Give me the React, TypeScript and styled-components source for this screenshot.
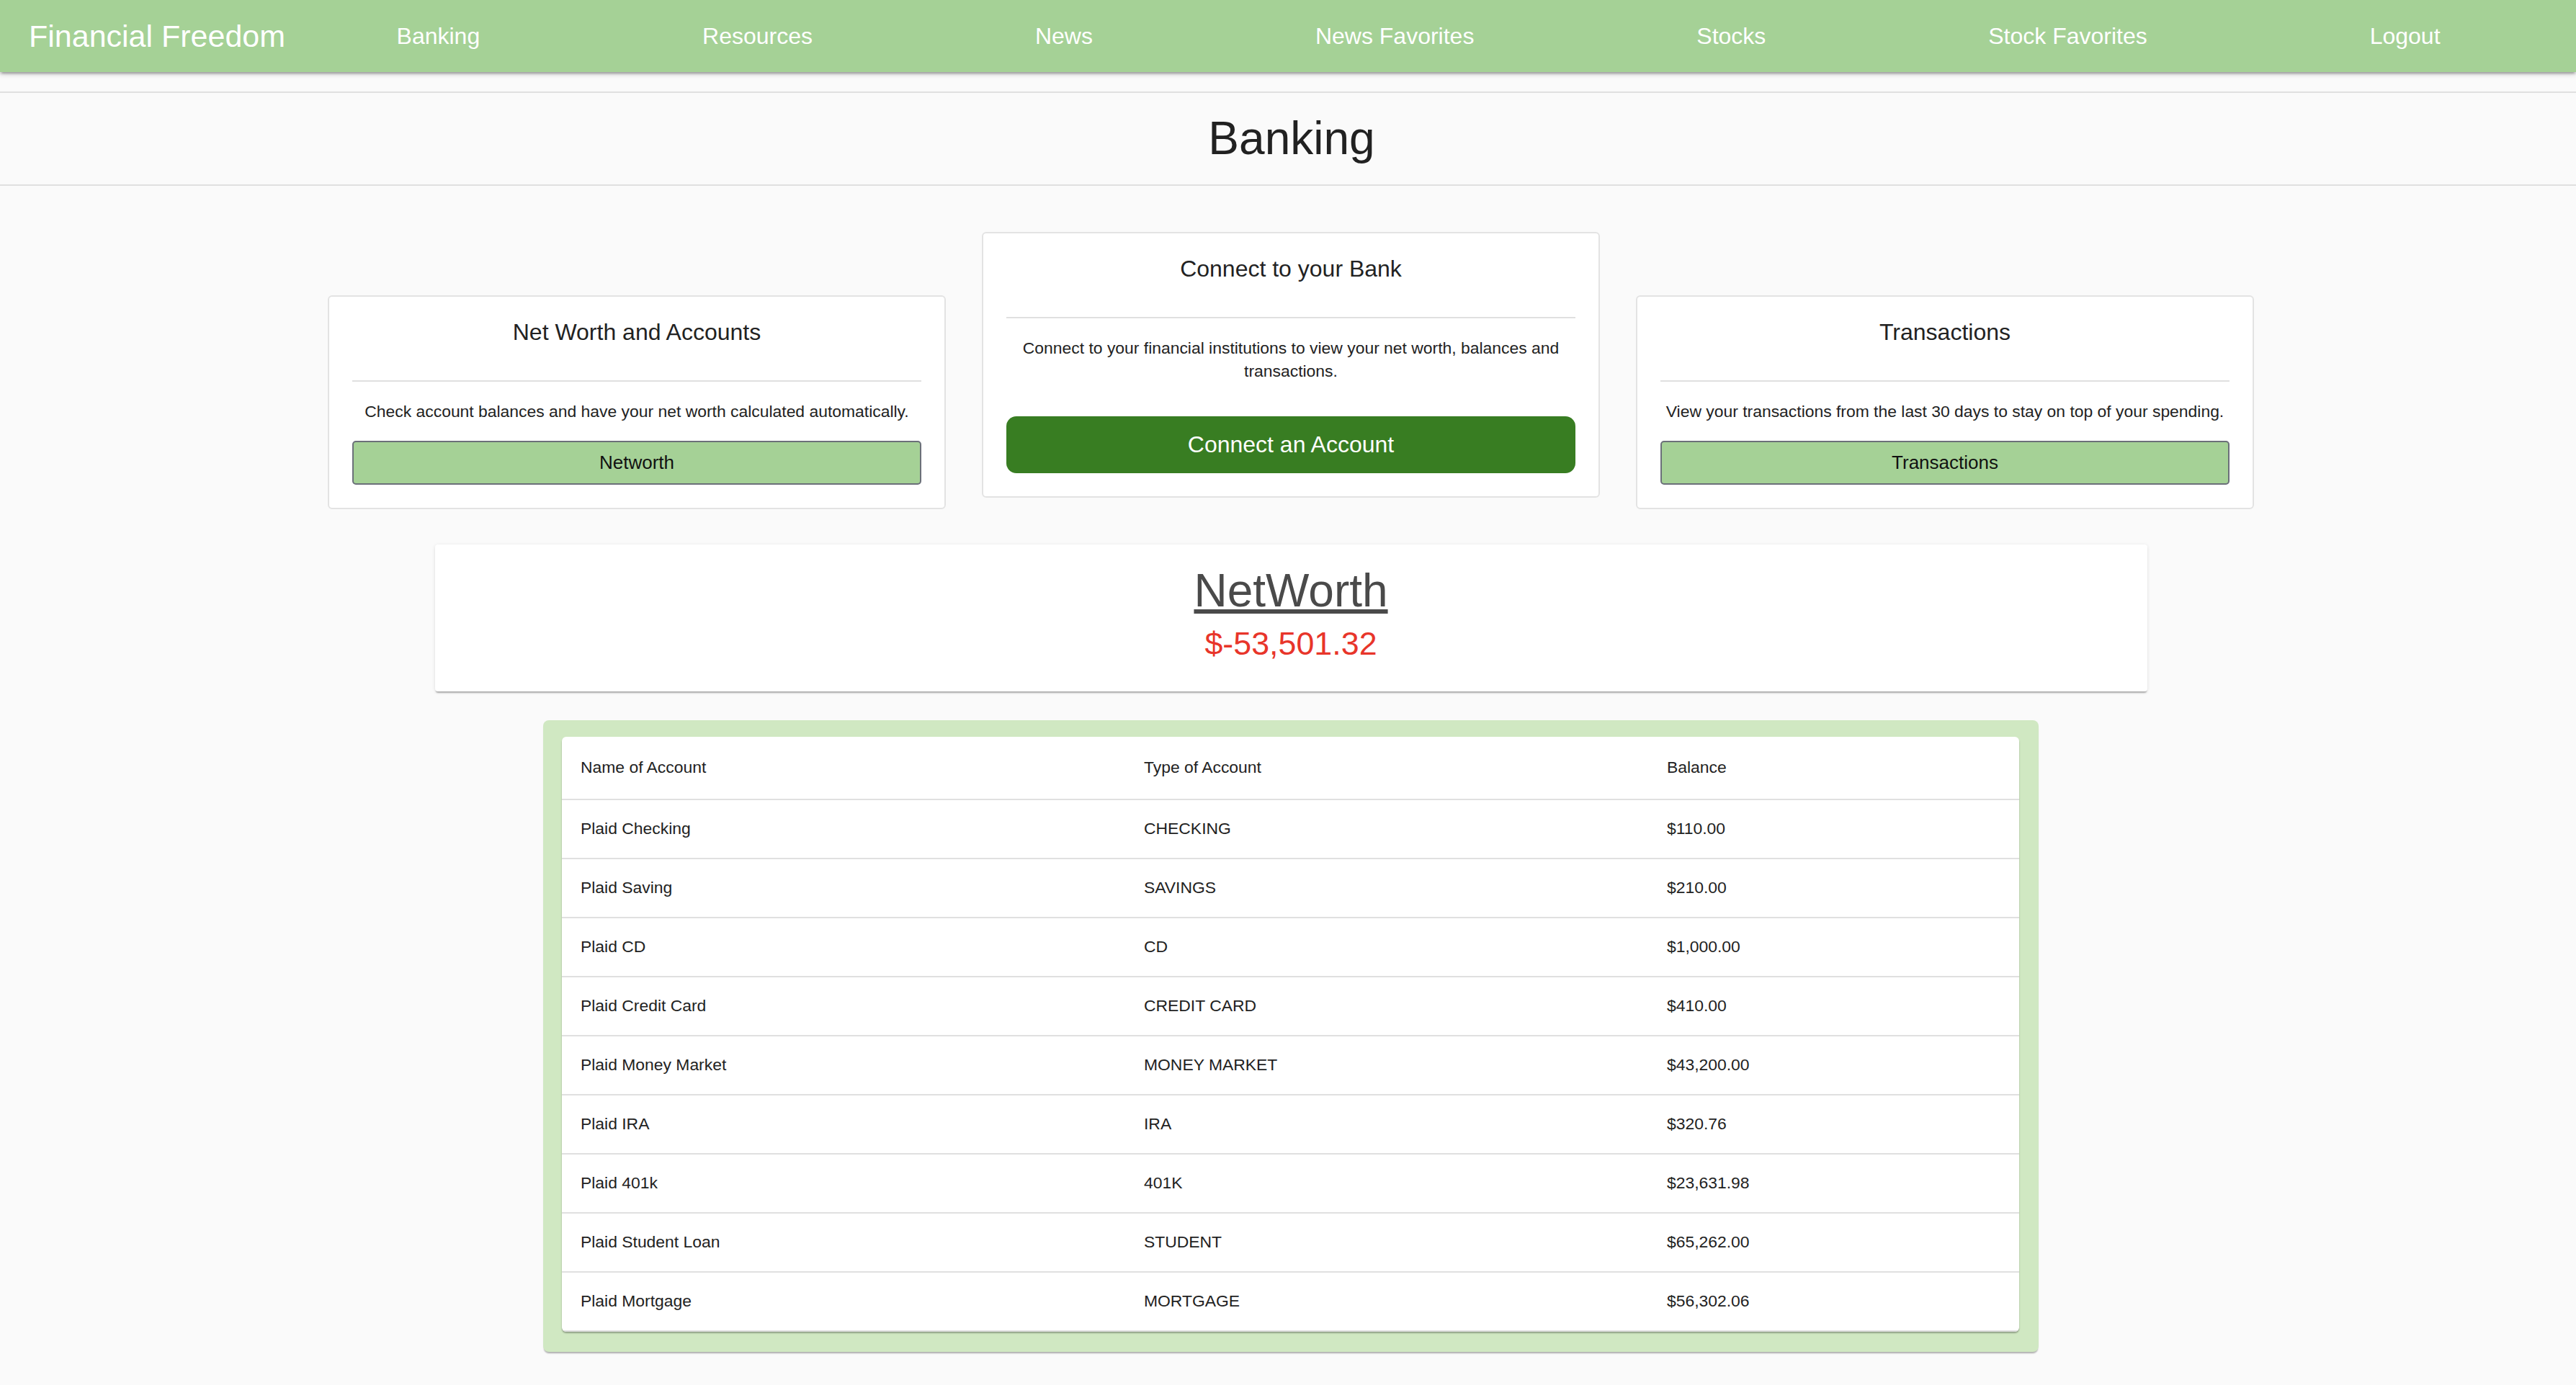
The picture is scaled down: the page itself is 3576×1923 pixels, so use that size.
import React from "react";
import styled, { createGlobalStyle } from "styled-components";

const GlobalStyle = createGlobalStyle`
  html, body { margin: 0; padding: 0; background: #fafafa; }
  body {
    font-family: "Liberation Sans", Arial, Helvetica, sans-serif;
    color: #222;
  }
  *, *::before, *::after { box-sizing: border-box; }
`;

const NavBar = styled.nav`
  height: 100px;
  background: #a5d196;
  display: flex;
  align-items: center;
  padding: 0 34px 0 40px;
  box-shadow: 0 3px 3px rgba(0, 0, 0, 0.14), 0 5px 2px -3px rgba(0, 0, 0, 0.12),
    0 2px 8px rgba(0, 0, 0, 0.2);
`;

const Brand = styled.a`
  font-size: 43px;
  line-height: 100px;
  color: #fff;
  text-decoration: none;
  white-space: nowrap;
`;

const NavList = styled.ul`
  flex: 1;
  display: flex;
  justify-content: space-around;
  list-style: none;
  margin: 0;
  padding: 0;
`;

const NavItem = styled.li`
  display: block;
`;

const NavLink = styled.a`
  font-size: 32px;
  line-height: 100px;
  color: #fff;
  text-decoration: none;
  white-space: nowrap;
`;

const TitleBar = styled.header`
  margin-top: 27px;
  border-top: 2px solid #e0e0e0;
  border-bottom: 2px solid #e0e0e0;
  text-align: center;
  padding-left: 10px;
`;

const PageTitle = styled.h1`
  margin: 0;
  font-size: 64px;
  font-weight: 400;
  line-height: 127px;
  color: #212121;
`;

const Content = styled.main`
  display: flex;
  flex-direction: column;
  align-items: center;
  padding-left: 8px;
`;

const CardRow = styled.section`
  display: flex;
  justify-content: center;
  align-items: flex-start;
  gap: 50px;
  margin-top: 64px;
`;

const Card = styled.div<{ $drop?: boolean }>`
  width: 858px;
  margin-top: ${(p) => (p.$drop ? 88 : 0)}px;
  background: #fff;
  border: 2px solid #e3e3e3;
  border-radius: 6px;
  padding: 0 32px 32px;
  text-align: center;
`;

const CardTitle = styled.h2`
  margin: 0;
  font-size: 32px;
  font-weight: 400;
  line-height: 51px;
  padding-top: 24px;
  padding-bottom: 41px;
  border-bottom: 2px solid #e0e0e0;
  color: #222;
`;

const CardText = styled.p`
  margin: 0;
  padding-top: 26px;
  font-size: 22.9px;
  line-height: 31.5px;
  color: #222;
`;

const OutlineButton = styled.button`
  display: block;
  width: 100%;
  height: 61px;
  margin-top: 24.5px;
  background: #a5d196;
  border: 2px solid #6b7079;
  border-radius: 5px;
  font-family: inherit;
  font-size: 26px;
  color: #111;
  cursor: pointer;
`;

const ConnectButton = styled.button`
  display: block;
  width: 100%;
  height: 79px;
  margin-top: 46.5px;
  background: #387d22;
  border: none;
  border-radius: 14px;
  font-family: inherit;
  font-size: 32px;
  color: #fff;
  cursor: pointer;
`;

const NetWorthCard = styled.section`
  margin-top: 49px;
  width: 2377px;
  background: #fff;
  border-radius: 4px;
  box-shadow: 0 3px 2px -1px rgba(0, 0, 0, 0.28), 0 1px 5px rgba(0, 0, 0, 0.1);
  text-align: center;
  padding: 26.7px 0 38.6px;
`;

const NetWorthTitle = styled.h3`
  margin: 0;
  font-size: 64px;
  font-weight: 400;
  line-height: 75px;
  color: #4a4a4a;
  text-decoration: underline;
  text-decoration-thickness: 6px;
  text-underline-offset: 4px;
`;

const Amount = styled.div<{ $negative?: boolean }>`
  margin-top: 9.6px;
  font-size: 44.8px;
  line-height: 1.2;
  color: ${(p) => (p.$negative ? "#e8352a" : "#2e7d32")};
`;

const TableFrame = styled.section`
  margin-top: 40px;
  margin-bottom: 47px;
  width: 2076px;
  background: #d0e8c2;
  border-radius: 8px;
  padding: 23px 27px 28px 26px;
  box-shadow: 0 3px 2px -1px rgba(0, 0, 0, 0.3);
`;

const TableCard = styled.div`
  background: #fff;
  border-radius: 6px;
  overflow: hidden;
  box-shadow: 0 2px 2px rgba(0, 0, 0, 0.3);
`;

const Table = styled.table`
  width: 100%;
  border-collapse: separate;
  border-spacing: 0;
  table-layout: fixed;
`;

const HeadCell = styled.th<{ $width?: number }>`
  box-sizing: content-box;
  width: ${(p) => (p.$width ? `${p.$width - 26}px` : "auto")};
  height: 86px;
  padding: 0 0 0 26px;
  text-align: left;
  font-weight: 400;
  font-size: 22.9px;
  color: #222;
  border-bottom: 2px solid #e0e0e0;
  vertical-align: middle;
`;

const Cell = styled.td`
  box-sizing: content-box;
  height: 80px;
  padding: 0 0 0 26px;
  font-size: 22.9px;
  color: #222;
  border-bottom: 2px solid #e0e0e0;
  vertical-align: middle;
`;

const navLinks = [
  "Banking",
  "Resources",
  "News",
  "News Favorites",
  "Stocks",
  "Stock Favorites",
  "Logout",
];

const accounts: [string, string, string][] = [
  ["Plaid Checking", "CHECKING", "$110.00"],
  ["Plaid Saving", "SAVINGS", "$210.00"],
  ["Plaid CD", "CD", "$1,000.00"],
  ["Plaid Credit Card", "CREDIT CARD", "$410.00"],
  ["Plaid Money Market", "MONEY MARKET", "$43,200.00"],
  ["Plaid IRA", "IRA", "$320.76"],
  ["Plaid 401k", "401K", "$23,631.98"],
  ["Plaid Student Loan", "STUDENT", "$65,262.00"],
  ["Plaid Mortgage", "MORTGAGE", "$56,302.06"],
];

export default function App() {
  return (
    <>
      <GlobalStyle />
      <NavBar>
        <Brand href="#">Financial Freedom</Brand>
        <NavList>
          {navLinks.map((l) => (
            <NavItem key={l}>
              <NavLink href="#">{l}</NavLink>
            </NavItem>
          ))}
        </NavList>
      </NavBar>
      <TitleBar>
        <PageTitle>Banking</PageTitle>
      </TitleBar>
      <Content>
        <CardRow>
          <Card $drop>
            <CardTitle>Net Worth and Accounts</CardTitle>
            <CardText>
              Check account balances and have your net worth calculated automatically.
            </CardText>
            <OutlineButton>Networth</OutlineButton>
          </Card>
          <Card>
            <CardTitle>Connect to your Bank</CardTitle>
            <CardText>
              Connect to your financial institutions to view your net worth, balances and
              transactions.
            </CardText>
            <ConnectButton>Connect an Account</ConnectButton>
          </Card>
          <Card $drop>
            <CardTitle>Transactions</CardTitle>
            <CardText>
              View your transactions from the last 30 days to stay on top of your spending.
            </CardText>
            <OutlineButton>Transactions</OutlineButton>
          </Card>
        </CardRow>
        <NetWorthCard>
          <NetWorthTitle>NetWorth</NetWorthTitle>
          <Amount $negative>$-53,501.32</Amount>
        </NetWorthCard>
        <TableFrame>
          <TableCard>
            <Table>
              <thead>
                <tr>
                  <HeadCell $width={782}>Name of Account</HeadCell>
                  <HeadCell $width={726}>Type of Account</HeadCell>
                  <HeadCell>Balance</HeadCell>
                </tr>
              </thead>
              <tbody>
                {accounts.map(([name, type, bal]) => (
                  <tr key={name}>
                    <Cell>{name}</Cell>
                    <Cell>{type}</Cell>
                    <Cell>{bal}</Cell>
                  </tr>
                ))}
              </tbody>
            </Table>
          </TableCard>
        </TableFrame>
      </Content>
    </>
  );
}
